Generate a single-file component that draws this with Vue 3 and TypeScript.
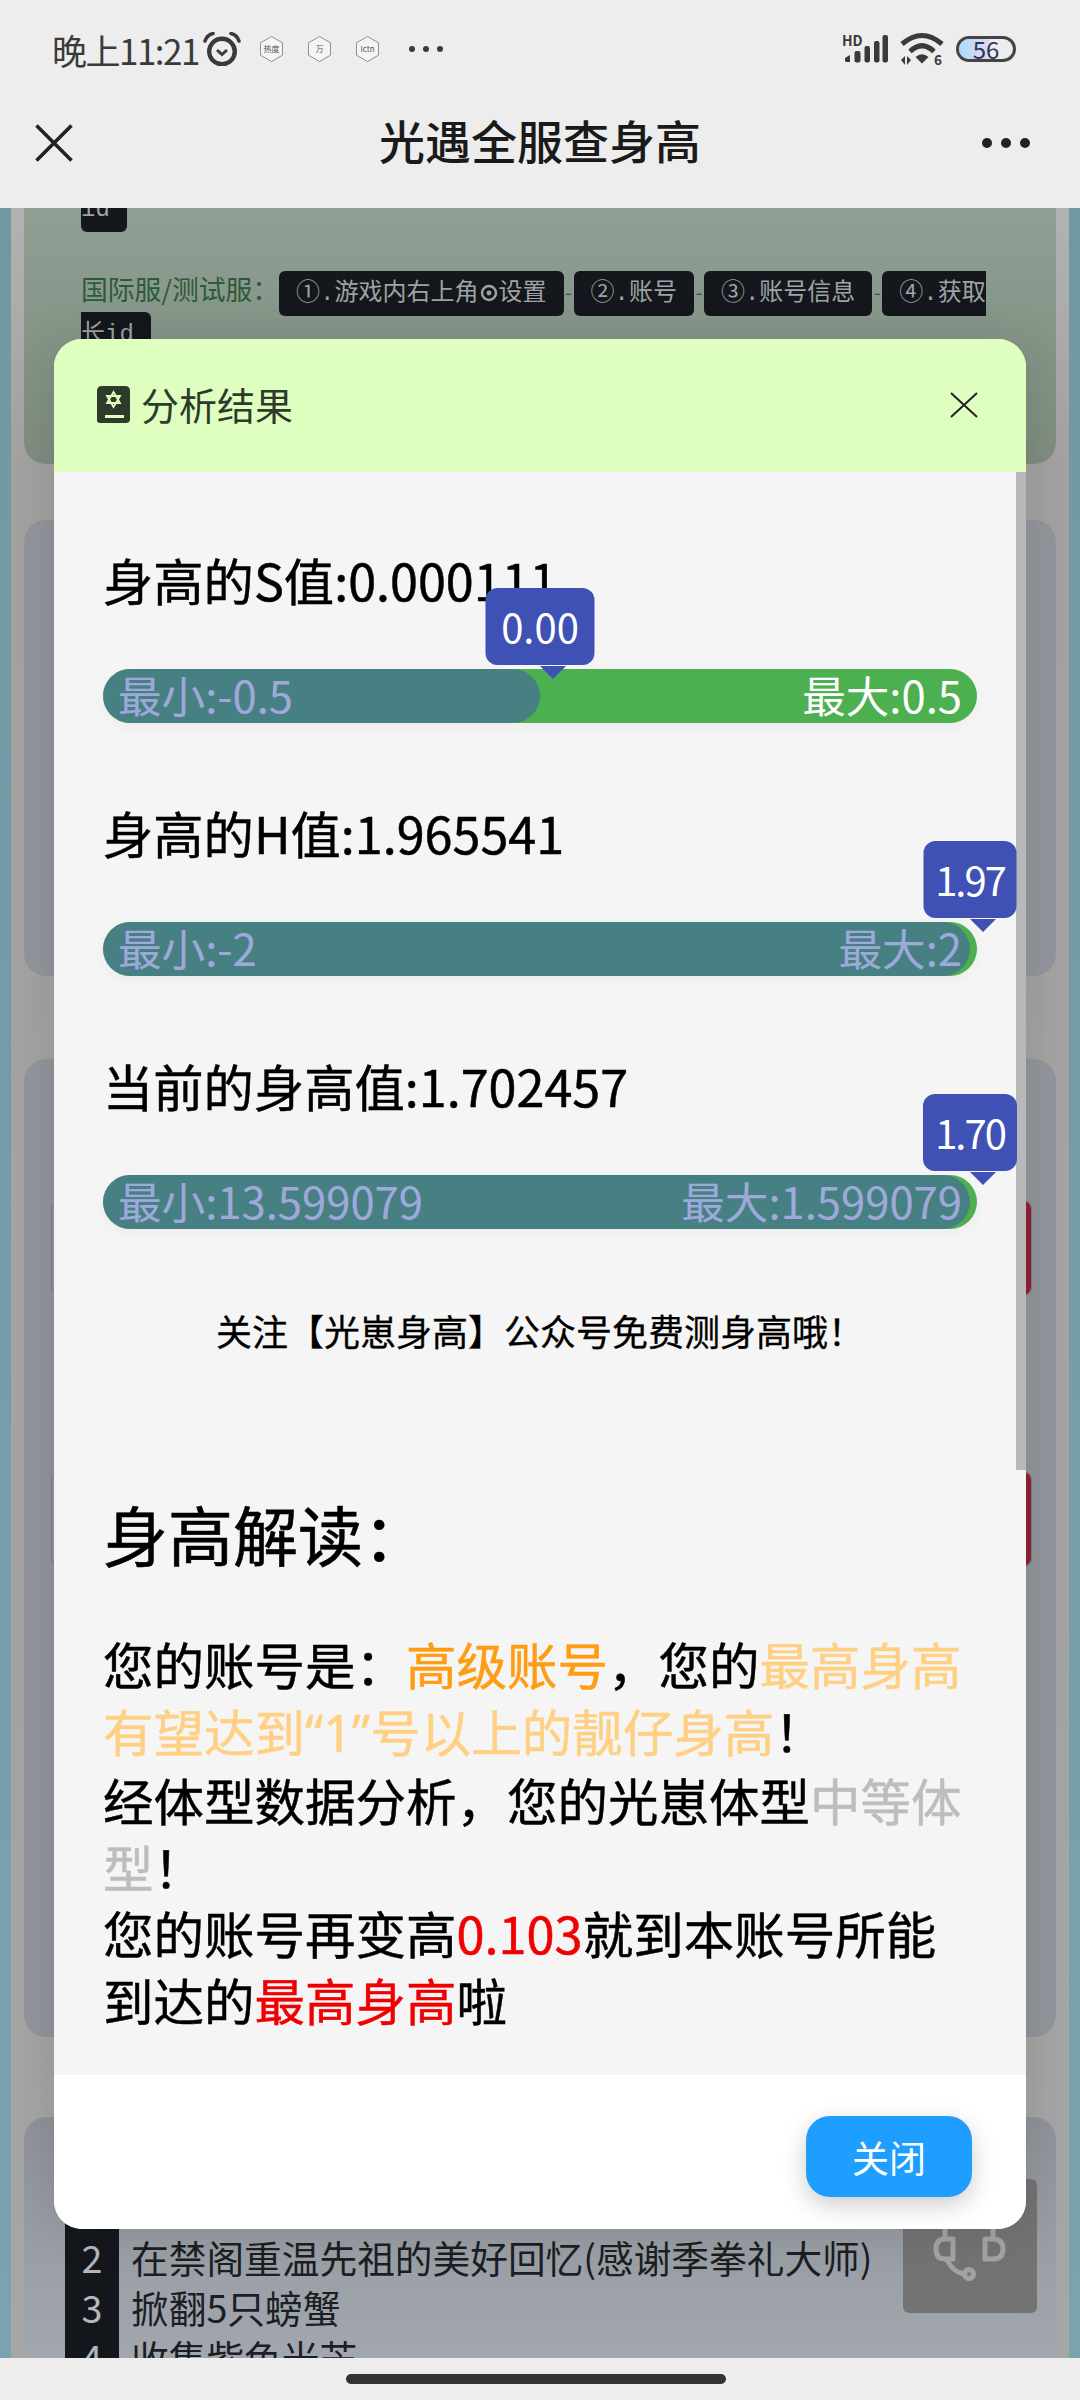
<template>
  <div class="page">
    <header class="top">
      <div class="status">
        <div class="status-left">
          <span class="time">晚上11:21</span>
          <svg class="alarm" viewBox="0 0 38 34" width="38" height="34">
            <circle cx="19" cy="19.5" r="12.8" fill="none" stroke="#3a3a3a" stroke-width="4.4" />
            <path d="M14 18l5 4.5 5-4.5" fill="none" stroke="#3a3a3a" stroke-width="3" />
            <path d="M2 9Q4 3 10 1.5M36 9Q34 3 28 1.5" fill="none" stroke="#3a3a3a" stroke-width="3.6" stroke-linecap="round" />
          </svg>
          <svg v-for="h in hexes" :key="h" class="hex" viewBox="0 0 23 26" width="23" height="26">
            <polygon points="11.5,0.5 22.5,6.8 22.5,19.2 11.5,25.5 0.5,19.2 0.5,6.8" fill="#f4f4f4" stroke="#777" stroke-width="0.8" />
            <text x="11.5" y="15.5" text-anchor="middle" font-size="8" fill="#555">{{ h }}</text>
          </svg>
          <span class="mini-dots"><i></i><i></i><i></i></span>
        </div>
        <div class="status-right">
          <svg viewBox="0 0 46 30" width="46" height="30">
            <text x="0" y="11.5" font-size="14" font-weight="700" fill="#3a3a3a">HD</text>
            <path d="M3 27l0-3 5-3v7H4z" fill="#3a3a3a" />
            <rect x="12.5" y="17" width="6" height="11.5" rx="2" fill="#3a3a3a" />
            <rect x="22.5" y="12" width="5.5" height="16.5" rx="2" fill="#3a3a3a" />
            <rect x="32" y="7" width="5.5" height="21.5" rx="2" fill="#3a3a3a" />
            <rect x="40.5" y="1" width="5.5" height="27.5" rx="2" fill="#3a3a3a" />
          </svg>
          <svg viewBox="0 0 44 34" width="44" height="34">
            <path d="M2 12Q22-5 42 12" fill="none" stroke="#3a3a3a" stroke-width="5" />
            <path d="M10 19.5Q22 8 34 19.5" fill="none" stroke="#3a3a3a" stroke-width="5" />
            <path d="M15.5 25Q22 19.5 28.5 25L22 31.5z" fill="#3a3a3a" />
            <path d="M1 28l4-4v9zM7 24l4 4-4 5z" fill="#3a3a3a" />
            <text x="34" y="33" font-size="13.5" font-weight="700" fill="#3a3a3a">6</text>
          </svg>
          <span class="battery"><span class="battery-fill"></span><span class="battery-num">56</span></span>
        </div>
      </div>
      <nav class="nav">
        <svg viewBox="0 0 38 38" width="38" height="38">
          <path d="M1.5 1.5l35 35M36.5 1.5l-35 35" stroke="#222" stroke-width="3.6" fill="none" />
        </svg>
        <span class="nav-title">光遇全服查身高</span>
        <span class="nav-dots"><i></i><i></i><i></i></span>
      </nav>
    </header>

    <main class="backdrop">
      <div class="gutter">
        <section class="card card-green">
          <p class="guide"><kbd class="kbd-wrapped">id</kbd></p>
          <p class="guide guide-second">
            国际服/测试服：<kbd>①.游戏内右上角<svg class="gear" viewBox="0 0 20 20" width="20" height="20"><circle cx="10" cy="10" r="7" fill="none" stroke="#9fa3a6" stroke-width="2.4" /><circle cx="10" cy="10" r="2.4" fill="#9fa3a6" /></svg>设置</kbd><span class="dash">-</span><kbd>②.账号</kbd><span class="dash">-</span><kbd>③.账号信息</kbd><span class="dash">-</span><kbd>④.获取长id</kbd>
          </p>
        </section>

        <section class="card card-plain"></section>

        <section class="card card-form">
          <div class="form-row"><span class="form-btn"></span></div>
          <div class="form-row"><span class="form-btn"></span></div>
        </section>

        <section class="card card-list">
          <div v-for="(task, i) in tasks" :key="i" class="task">
            <span class="task-num">{{ i + 1 }}</span>
            <span>{{ task }}</span>
          </div>
        </section>
      </div>

      <div class="service">
        <svg viewBox="0 0 134 134" width="134" height="134">
          <g fill="none" stroke="#a3a3a3" stroke-width="5" stroke-linecap="round" stroke-linejoin="round">
            <path d="M42 59V40Q66 10 90 40V59" />
            <path d="M50 60H42Q33 60 33 70Q33 80 42 80H50z" />
            <path d="M82 60H90Q100 60 100 70Q100 80 90 80H82z" />
            <path d="M44 81Q50 93 61 95" />
            <circle cx="66" cy="95" r="4.5" />
          </g>
        </svg>
      </div>
    </main>

    <footer class="bottom"><span class="home-bar"></span></footer>

    <div class="modal">
      <div class="modal-head">
        <div class="modal-title">
          <svg viewBox="0 0 33 37" width="33" height="37">
            <path d="M5 0H28Q33 0 33 5V33Q33 37 29 37H3Q0 37 0 34V5Q0 0 5 0z" fill="#2f3a2b" />
            <rect x="8" y="29" width="19" height="3" fill="#deffc0" />
            <path d="M16.5 6l6.5 11H10zM16.5 21l-6.5-11H23z" fill="none" stroke="#deffc0" stroke-width="1.8" />
          </svg>
          <span class="modal-title-text">分析结果</span>
        </div>
        <svg viewBox="0 0 28 26" width="28" height="26">
          <path d="M1 1l26 24M27 1L1 25" stroke="#222" stroke-width="2" fill="none" />
        </svg>
      </div>

      <div class="modal-body">
        <div class="modal-content">
          <div v-for="b in bars" :key="b.title" class="metric">
            <div class="metric-title">{{ b.title }}</div>
            <div class="bar">
              <span>{{ b.min }}</span>
              <span>{{ b.max }}</span>
              <div class="bar-fill" :style="{ width: b.pct + '%' }"></div>
              <div class="tip" :style="{ left: b.pct + '%', width: b.tipWidth + 'px', letterSpacing: b.tipSpacing + 'px' }">{{ b.tip }}</div>
              <i class="tip-arrow" :style="{ left: b.pct + '%' }"></i>
            </div>
          </div>

          <p class="notice">关注【光崽身高】公众号免费测身高哦！</p>
          <h2 class="reading-title">身高解读：</h2>
          <p class="reading">
            您的账号是：<span class="orange">高级账号</span>，您的<span class="light-orange">最高身高有望达到<span class="latin">“1”</span>号以上的靓仔身高</span>！<br />
            经体型数据分析，您的光崽体型<span class="grey">中等体型</span>！<br />
            您的账号再变高<span class="red">0.103</span>就到本账号所能到达的<span class="red">最高身高</span>啦
          </p>
        </div>
        <div class="scrollbar"><div class="thumb"></div></div>
      </div>

      <div class="modal-foot">
        <button type="button" class="close-btn">关闭</button>
      </div>
    </div>
  </div>
</template>

<script setup lang="ts">
interface BarItem {
  title: string
  min: string
  max: string
  pct: number
  tip: string
  tipWidth: number
  tipSpacing: number
}

const hexes = ['热度', '万', 'Ictn']

const bars: BarItem[] = [
  { title: '身高的S值:0.000111', min: '最小:-0.5', max: '最大:0.5', pct: 50, tip: '0.00', tipWidth: 109, tipSpacing: 0 },
  { title: '身高的H值:1.965541', min: '最小:-2', max: '最大:2', pct: 99.2, tip: '1.97', tipWidth: 93, tipSpacing: -2 },
  { title: '当前的身高值:1.702457', min: '最小:13.599079', max: '最大:1.599079', pct: 99.2, tip: '1.70', tipWidth: 94, tipSpacing: -2 }
]

const tasks = ['', '在禁阁重温先祖的美好回忆(感谢季拳礼大师)', '掀翻5只螃蟹', '收集紫色光芒']
</script>

<style>
html,
body {
  margin: 0;
  background: #ededed;
}
</style>

<style scoped>
.page {
  position: relative;
  display: flex;
  flex-direction: column;
  width: 1080px;
  height: 2400px;
  overflow: hidden;
  font-family: "Noto Sans CJK SC", "Noto Sans", sans-serif;
}

.top {
  position: relative;
  z-index: 2;
  background: #ededed;
}

.status {
  display: flex;
  justify-content: space-between;
  align-items: center;
  height: 98px;
  padding: 0 64px 0 52px;
}

.status-left {
  display: flex;
  align-items: center;
}

.time {
  font-size: 35px;
  letter-spacing: -1.5px;
  color: #3a3a3a;
}

.alarm {
  margin: 0 19px 0 4px;
}

.hex {
  margin-right: 25px;
}

.mini-dots {
  display: flex;
  gap: 8px;
  margin-left: 5px;
}

.mini-dots i {
  width: 6px;
  height: 6px;
  border-radius: 50%;
  background: #3a3a3a;
}

.status-right {
  display: flex;
  align-items: center;
  gap: 12px;
}

.battery {
  position: relative;
  display: block;
  box-sizing: border-box;
  width: 60px;
  height: 26px;
  border: 3px solid #444;
  border-radius: 13px;
  overflow: hidden;
}

.battery-fill {
  position: absolute;
  left: 0;
  top: 0;
  bottom: 0;
  width: 58%;
  background: linear-gradient(90deg, #a8dcff, #e8d8ea);
}

.battery-num {
  position: absolute;
  inset: 0;
  text-align: center;
  font-size: 24px;
  line-height: 20px;
  color: #2c3560;
}

.nav {
  position: relative;
  display: flex;
  justify-content: space-between;
  align-items: center;
  height: 90px;
  padding: 0 50px 20px 35px;
}

.nav-title {
  position: absolute;
  left: 0;
  right: 0;
  padding-bottom: 8px;
  text-align: center;
  font-size: 46px;
  line-height: 82px;
  font-weight: 500;
  color: #1a1a1a;
}

.nav-dots {
  display: flex;
  gap: 9px;
}

.nav-dots i {
  width: 10px;
  height: 10px;
  border-radius: 50%;
  background: #222;
}

.backdrop {
  position: relative;
  flex: 1;
  min-height: 0;
  padding: 0 11px;
  background: linear-gradient(#6f98a3, #7aa3b0);
}

.gutter {
  height: 100%;
  padding: 0 13px;
  overflow: hidden;
  background: linear-gradient(#b2b2b2, #a4a2a0 12%, #a6a6a6);
}

.card {
  border-radius: 22px;
  background: #92969c;
}

.card-green {
  box-sizing: border-box;
  height: 316px;
  margin-top: -60px;
  padding: 39px 66px 0 57px;
  background: linear-gradient(#93a397, #7f8c80);
}

.guide {
  margin: 0;
  font-size: 26.8px;
  line-height: 36px;
  color: #2d5a3a;
}

.guide-second {
  margin-top: 43px;
}

kbd {
  padding: 9px 17px;
  border-radius: 6px;
  font-family: "Liberation Mono", "Noto Sans CJK SC", monospace;
  font-size: 24px;
  color: #9fa3a6;
  background: #14181c;
}

.kbd-wrapped {
  padding-left: 0;
}

.dash {
  display: inline-block;
  width: 10px;
  font-size: 20px;
  text-align: center;
}

.gear {
  vertical-align: -3px;
}

.card-plain {
  height: 456px;
  margin-top: 56px;
}

.card-form {
  height: 978px;
  margin-top: 83px;
  padding: 141px 0 0 27px;
  box-sizing: border-box;
}

.form-row {
  display: flex;
  justify-content: flex-end;
  box-sizing: border-box;
  width: 981px;
  height: 96px;
  margin-bottom: 175px;
  border: 1px solid #7d8086;
  border-radius: 8px;
}

.form-btn {
  width: 80px;
  border-radius: 8px;
  background: #8f2332;
}

.card-list {
  height: 400px;
  margin-top: 80px;
  padding: 65px 0 0 41px;
  box-sizing: border-box;
  background: linear-gradient(#8f9399, #a2a7af 60%);
}

.task {
  display: flex;
  gap: 12px;
  height: 50px;
  font-size: 37.7px;
  line-height: 50px;
  white-space: nowrap;
  color: #1b1e22;
}

.task-num {
  width: 54px;
  text-align: center;
  color: #b5b8ba;
  background: #14181c;
}

.service {
  position: absolute;
  left: 903px;
  top: 1971px;
  width: 134px;
  height: 134px;
  border-radius: 6px;
  background: #737373;
}

.bottom {
  position: relative;
  z-index: 2;
  display: flex;
  justify-content: center;
  align-items: flex-start;
  height: 42px;
  background: #ededed;
}

.home-bar {
  width: 380px;
  height: 10px;
  margin: 16px 8px 0 0;
  border-radius: 5px;
  background: #333;
}

.modal {
  position: absolute;
  left: 54px;
  top: 339px;
  z-index: 3;
  display: flex;
  flex-direction: column;
  width: 972px;
  height: 1890px;
  border-radius: 28px;
  overflow: hidden;
  background: #fff;
  box-shadow: 0 0 50px rgba(0, 0, 0, 0.12);
}

.modal-head {
  display: flex;
  justify-content: space-between;
  align-items: center;
  flex: none;
  box-sizing: border-box;
  height: 133px;
  padding: 0 48px 2px 43px;
  background: #deffc0;
}

.modal-title {
  display: flex;
  align-items: center;
  gap: 11px;
  font-size: 38px;
  color: #2f3a2b;
}

.modal-title-text {
  padding-bottom: 2px;
}

.modal-body {
  display: flex;
  flex: 1;
  min-height: 0;
  overflow: hidden;
  background: #f5f5f5;
}

.modal-content {
  box-sizing: border-box;
  width: 962px;
  padding: 74px 39px 0 49px;
}

.scrollbar {
  width: 10px;
}

.thumb {
  height: 998px;
  background: #b8b8b8;
}

.metric {
  margin-bottom: 76px;
}

.metric-title {
  margin-bottom: 56px;
  font-size: 50.3px;
  line-height: 67px;
  color: #000;
  -webkit-text-stroke: 0.5px #000;
}

.bar {
  position: relative;
  display: flex;
  justify-content: space-between;
  align-items: center;
  box-sizing: border-box;
  height: 54px;
  padding: 0 15px 5px;
  border-radius: 27px;
  font-size: 43.6px;
  color: #fff;
  background: #4caf50;
  box-shadow: 0 4px 14px rgba(0, 0, 0, 0.04);
}

.bar-fill {
  position: absolute;
  left: 0;
  top: 0;
  bottom: 0;
  border-radius: 27px;
  background: rgba(63, 81, 181, 0.5);
}

.tip {
  position: absolute;
  bottom: 58px;
  height: 77px;
  transform: translateX(-50%);
  border-radius: 12px;
  text-align: center;
  font-size: 40px;
  line-height: 77px;
  background: #3f51b5;
}

.tip-arrow {
  position: absolute;
  top: -3px;
  width: 0;
  height: 0;
  border-left: 13px solid transparent;
  border-right: 13px solid transparent;
  border-top: 13px solid #3f51b5;
}

.notice {
  margin: 0;
  text-align: center;
  font-size: 36px;
  line-height: 50px;
  color: #000;
  -webkit-text-stroke: 0.3px #000;
}

.reading-title {
  margin: 133px 0 52px;
  font-size: 65px;
  line-height: 90px;
  font-weight: 400;
  color: #000;
  -webkit-text-stroke: 0.6px #000;
}

.reading {
  margin: 0;
  font-size: 50.5px;
  line-height: 66.6px;
  color: #000;
  -webkit-text-stroke: 0.5px;
}

.latin {
  font-family: "Noto Sans", sans-serif;
}

.orange {
  color: #ff9c11;
}

.light-orange {
  color: #ffd084;
}

.grey {
  color: #bdbdbd;
}

.red {
  color: #f00000;
}

.modal-foot {
  display: flex;
  justify-content: flex-end;
  align-items: flex-start;
  flex: none;
  box-sizing: border-box;
  height: 154px;
  padding: 41px 54px 0 0;
  background: #fff;
}

.close-btn {
  width: 166px;
  height: 81px;
  border: none;
  border-radius: 24px;
  font-family: inherit;
  font-size: 37px;
  color: #fff;
  background: #1e9fff;
  box-shadow: 0 8px 24px rgba(0, 0, 0, 0.2);
}
</style>
